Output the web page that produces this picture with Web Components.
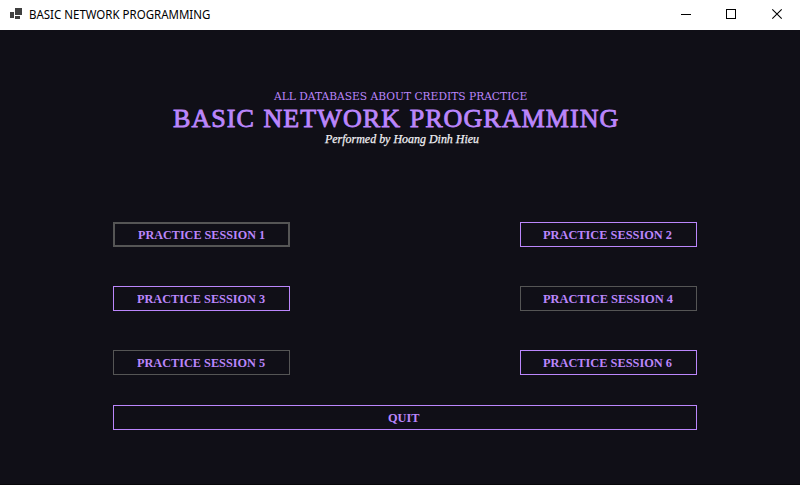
<!DOCTYPE html>
<html lang="en"><head><meta charset="utf-8"><title>BASIC NETWORK PROGRAMMING</title>
<style>html,body{margin:0;width:800px;height:485px;overflow:hidden;background:#100f17}</style></head>
<body><practice-window></practice-window>
<script>
// Single line of text stretched horizontally to the width given in pixels.
class FitText extends HTMLElement{
  connectedCallback(){
    const w=+this.getAttribute('width');
    const root=this.shadowRoot||this.attachShadow({mode:'open'});
    root.innerHTML=`<style>:host{display:block;width:${w}px;white-space:nowrap}
      span{display:inline-block;transform-origin:0 50%}</style><span><slot></slot></span>`;
    const s=root.querySelector('span');
    s.style.transform=`scaleX(${w/s.offsetWidth})`;
  }
}
class TitleBar extends HTMLElement{
  connectedCallback(){
    this.attachShadow({mode:'open'}).innerHTML=`<style>
    :host{display:flex;height:30px;background:#fff;color:#000;box-sizing:border-box;align-items:flex-start}
    .icon{margin:8px 7px 0 10px}
    fit-text{font:12px/16px "Noto Sans",sans-serif;margin-top:7px}
    .controls{margin-left:auto;display:flex}
    svg{display:block;flex:none}</style>
    <svg class="icon" width="12" height="11" shape-rendering="crispEdges" fill="#404040"><path d="M0 4h4v6H0zM5 0h7v7H5zM5 8h5v3H5z"/></svg>
    <fit-text width="181"><slot></slot></fit-text>
    <div class="controls">
     <svg width="45" height="30" shape-rendering="crispEdges"><path d="M17 14h10v1H17z"/></svg>
     <svg width="45" height="30" shape-rendering="crispEdges"><path d="M17.5 9.5h9v9h-9z" fill="none" stroke="#000"/></svg>
     <svg width="46" height="30"><path d="M18.3 9.3l9.4 9.4M27.7 9.3l-9.4 9.4" fill="none" stroke="#000" stroke-width="1.1"/></svg>
    </div>`;
  }
}
class OutlineButton extends HTMLElement{
  connectedCallback(){
    const t=this.getAttribute('tone');
    this.attachShadow({mode:'open'}).innerHTML=`<style>
    :host{display:block;height:25px}
    button{all:unset;box-sizing:border-box;display:flex;width:100%;height:25px;
      border:${t==='focus'?2:1}px solid ${t?'#555':'#bb86fc'};
      padding-left:${+this.getAttribute('inset')-(t==='focus'?2:1)}px;align-items:center;color:#bb86fc}
    fit-text{font:bold 13.5px/19px "Liberation Serif",serif}</style>
    <button><fit-text width="${this.getAttribute('text-width')}"><slot></slot></fit-text></button>`;
  }
}
class PracticeWindow extends HTMLElement{
  connectedCallback(){
    this.attachShadow({mode:'open'}).innerHTML=`<style>
    :host{display:flex;flex-direction:column;width:800px;height:485px;background:#100f17;box-sizing:border-box;border-bottom:1px solid #08070a}
    header{height:192px;box-sizing:border-box;padding-top:60px;color:#bb86fc}
    .over{font:11px/14px "DejaVu Serif",serif;margin-left:274px}
    .main{font:25.5px/26px "Liberation Serif",serif;-webkit-text-stroke:.8px #bb86fc;letter-spacing:1px;word-spacing:1px;margin:2px 0 0 173px}
    .by{font:italic 12.5px/16px "Liberation Serif",serif;-webkit-text-stroke:.25px #f0f0f4;color:#f0f0f4;margin:-1px 0 0 325px}
    main{padding:0 103px 0 113px}
    .grid{display:grid;grid-template-columns:177px 177px;justify-content:space-between;row-gap:39px;margin-bottom:30px}</style>
    <title-bar>BASIC NETWORK PROGRAMMING</title-bar>
    <header>
      <fit-text class="over" width="253">ALL DATABASES ABOUT CREDITS PRACTICE</fit-text>
      <fit-text class="main" width="446">BASIC NETWORK PROGRAMMING</fit-text>
      <fit-text class="by" width="154">Performed by Hoang Dinh Hieu</fit-text>
    </header>
    <main><div class="grid">
      <outline-button tone="focus" inset="25" text-width="127">PRACTICE SESSION 1</outline-button>
      <outline-button inset="23" text-width="129">PRACTICE SESSION 2</outline-button>
      <outline-button inset="24" text-width="128">PRACTICE SESSION 3</outline-button>
      <outline-button tone="muted" inset="23" text-width="130">PRACTICE SESSION 4</outline-button>
      <outline-button tone="muted" inset="24" text-width="128">PRACTICE SESSION 5</outline-button>
      <outline-button inset="23" text-width="129">PRACTICE SESSION 6</outline-button>
    </div><outline-button inset="275" text-width="32">QUIT</outline-button></main>`;
  }
}
customElements.define('fit-text',FitText);
customElements.define('title-bar',TitleBar);
customElements.define('outline-button',OutlineButton);
customElements.define('practice-window',PracticeWindow);
</script></body></html>
